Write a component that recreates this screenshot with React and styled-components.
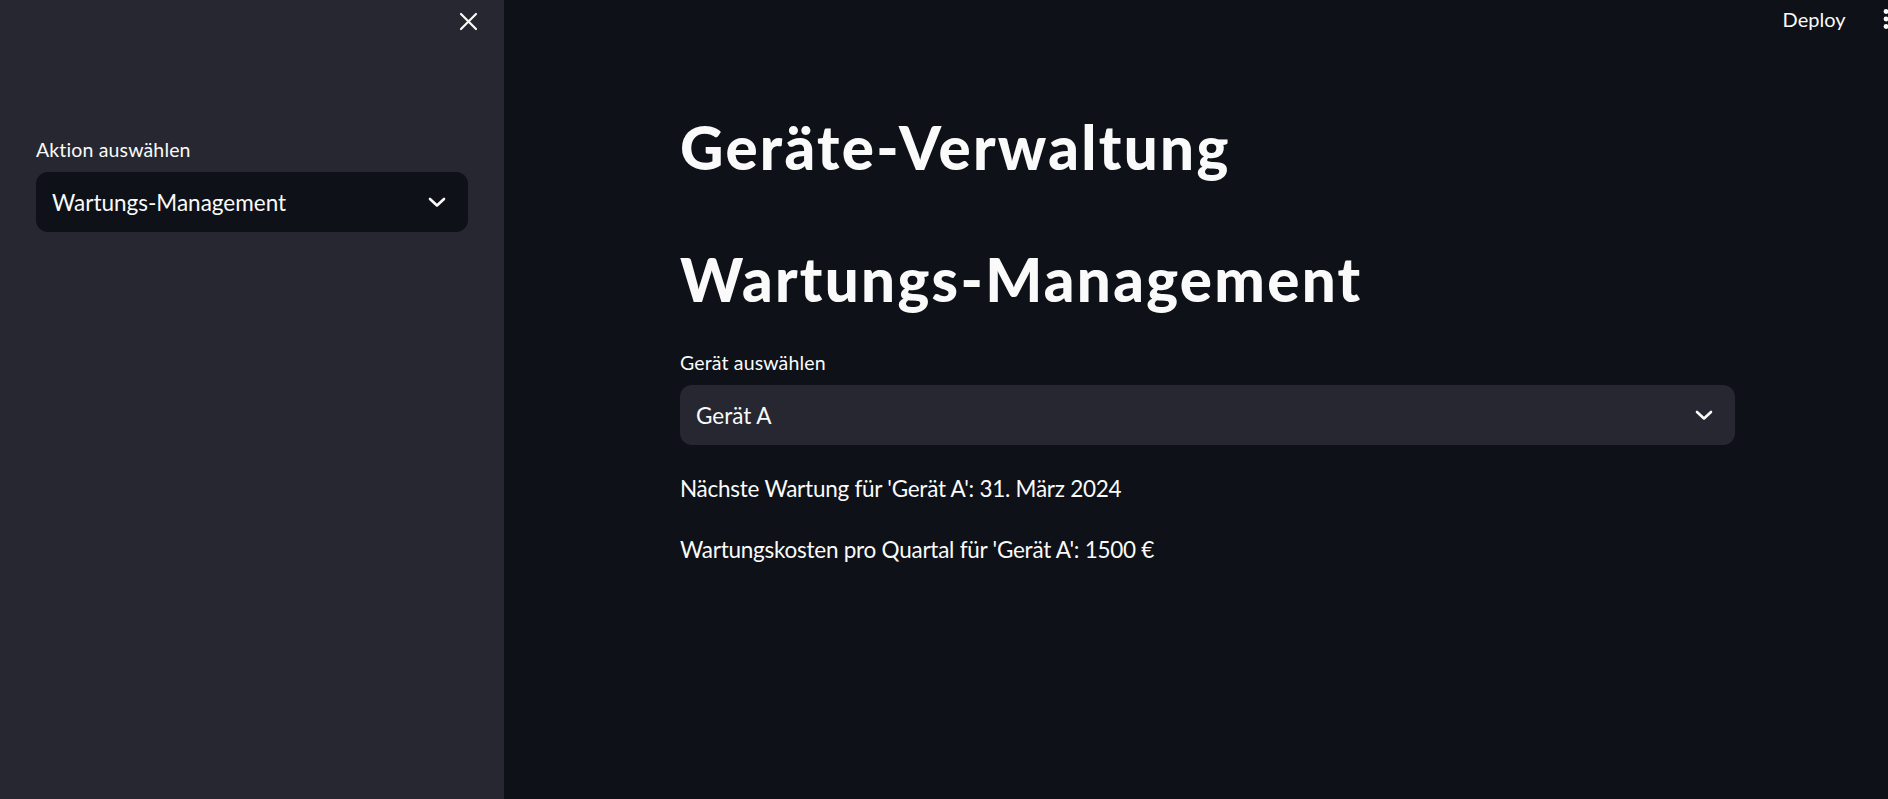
import React from 'react';
import styled, { createGlobalStyle } from 'styled-components';

const GlobalStyle = createGlobalStyle`
    html, body {
        margin: 0;
        padding: 0;
        background: #0e1117;
    }
    * {
        box-sizing: border-box;
    }
`;

const Chevron = () => (
    <svg width="18" height="11" viewBox="0 0 18 11" fill="none">
        <polyline points="2,2 9,8.5 16,2" stroke="#fafafa" strokeWidth="2.6" strokeLinecap="round" strokeLinejoin="round" />
    </svg>
);

const CloseIcon = () => (
    <svg width="19" height="19" viewBox="0 0 19 19" fill="none">
        <line x1="2" y1="2" x2="17" y2="17" stroke="#fafafa" strokeWidth="2.2" strokeLinecap="round" />
        <line x1="17" y1="2" x2="2" y2="17" stroke="#fafafa" strokeWidth="2.2" strokeLinecap="round" />
    </svg>
);

const Kebab = () => (
    <svg width="8" height="22" viewBox="0 0 8 22" fill="#fafafa">
        <circle cx="4" cy="3.5" r="2.4" />
        <circle cx="4" cy="11" r="2.4" />
        <circle cx="4" cy="18.5" r="2.4" />
    </svg>
);

const App = () => {
    return (
        <Page>
            <GlobalStyle />
            <Sidebar>
                <CloseRow>
                    <IconButton aria-label="Sidebar schließen">
                        <CloseIcon />
                    </IconButton>
                </CloseRow>
                <Field>
                    <Label>Aktion auswählen</Label>
                    <Select $bg="#0e1117">
                        <span>Wartungs-Management</span>
                        <Chevron />
                    </Select>
                </Field>
            </Sidebar>

            <Main>
                <Header>
                    <DeployButton>Deploy</DeployButton>
                    <MenuButton>
                        <Kebab />
                    </MenuButton>
                </Header>
                <Content>
                    <Title>Geräte-Verwaltung</Title>
                    <Title $top="59.5px">Wartungs-Management</Title>
                    <Field $top="36.5px">
                        <Label>Gerät auswählen</Label>
                        <Select $bg="#262730">
                            <span>Gerät A</span>
                            <Chevron />
                        </Select>
                    </Field>
                    <Text $top="30px">Nächste Wartung für 'Gerät A': 31. März 2024</Text>
                    <Text $top="34px">Wartungskosten pro Quartal für 'Gerät A': 1500 €</Text>
                </Content>
            </Main>
        </Page>
    );
}

const Page = styled.div`
    display: flex;
    width: 100%;
    height: 100vh;
    overflow: hidden;
    background: #0e1117;
    color: #fafafa;
    font-family: Lato, "Noto Sans", sans-serif;
`;

const Sidebar = styled.aside`
    width: 504px;
    flex-shrink: 0;
    display: flex;
    flex-direction: column;
    padding: 0 36px;
    background: #262730;
`;

const CloseRow = styled.div`
    display: flex;
    justify-content: flex-end;
    height: 138px;
    padding-top: 12px;
    margin-right: -9.5px;
`;

const IconButton = styled.button`
    width: 19px;
    height: 19px;
    padding: 0;
    border: none;
    background: none;
    cursor: pointer;
    display: flex;
`;

const Field = styled.div`
    display: flex;
    flex-direction: column;
    gap: 11px;
    margin-top: ${(p) => p.$top || '0'};
`;

const Label = styled.label`
    font-size: 19.5px;
    line-height: 23.4px;
    letter-spacing: 0.15px;
    color: #fafafa;
`;

const Select = styled.div`
    display: flex;
    align-items: center;
    justify-content: space-between;
    height: 60px;
    padding: 0 22px 0 16px;
    border-radius: 12px;
    background: ${(p) => p.$bg};
    font-size: 22.5px;
    color: #fafafa;
    cursor: pointer;
`;

const Main = styled.main`
    flex: 1;
    display: flex;
    flex-direction: column;
    min-width: 0;
`;

const Header = styled.header`
    display: flex;
    justify-content: flex-end;
    align-items: flex-start;
    gap: 36px;
    height: 44px;
    padding-top: 7px;
`;

const DeployButton = styled.button`
    border: none;
    background: none;
    padding: 0;
    color: #fafafa;
    font-family: Lato, "Noto Sans", sans-serif;
    font-size: 20px;
    line-height: 24px;
    cursor: pointer;
`;

const MenuButton = styled.button`
    border: none;
    background: none;
    padding: 0;
    margin-right: -1.5px;
    margin-top: 0.5px;
    display: flex;
    cursor: pointer;
`;

const Content = styled.div`
    width: 1055px;
    margin-left: 176px;
    padding-top: 67px;
    display: flex;
    flex-direction: column;
`;

const Title = styled.h1`
    margin: ${(p) => p.$top || '0'} 0 0;
    font-size: 60px;
    line-height: 72px;
    font-weight: 900;
    letter-spacing: 2.3px;
    color: #fafafa;
`;

const Text = styled.p`
    margin: ${(p) => p.$top} 0 0;
    font-size: 22.5px;
    line-height: 27px;
    letter-spacing: -0.25px;
    color: #fafafa;
`;

export default App
